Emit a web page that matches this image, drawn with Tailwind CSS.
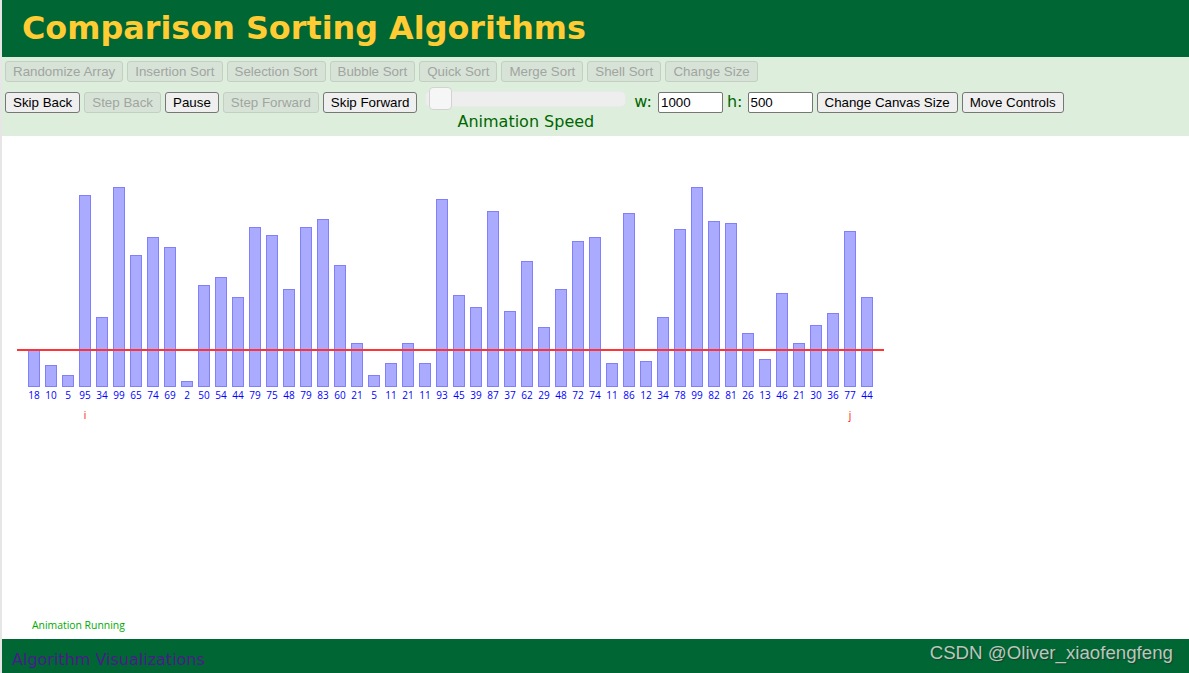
<!DOCTYPE html>
<html lang="en">
<head>
    <meta charset="UTF-8">
    <meta name="viewport" content="width=device-width, initial-scale=1.0">
    <title>Comparison Sorting Algorithms</title>
    <script src="https://cdn.jsdelivr.net/npm/@tailwindcss/browser@4"></script>
</head>
<body class="bg-white h-[673px] overflow-hidden font-['Liberation_Sans',sans-serif]">
    <div class="h-full flex flex-col border-l-2 border-[#e6e6e6]">
        <header class="h-[57px] shrink-0 bg-[#006633] flex items-center pl-[20px]">
            <h1 class="font-['DejaVu_Sans',sans-serif] font-bold text-[31.85px] text-[#ffcc33]">Comparison Sorting Algorithms</h1>
        </header>

        <section class="h-[79px] shrink-0 bg-[#ddeedd] pt-[4px] pl-[3px] text-[13.33px] leading-[15px]">
            <div class="flex gap-[4px] h-[21px]">
                <button disabled class="px-[7px] border border-[#c4cfc4] rounded-[3px] bg-[#d8e3d8] text-[#a0a5a0]">Randomize Array</button>
                <button disabled class="px-[7px] border border-[#c4cfc4] rounded-[3px] bg-[#d8e3d8] text-[#a0a5a0]">Insertion Sort</button>
                <button disabled class="px-[7px] border border-[#c4cfc4] rounded-[3px] bg-[#d8e3d8] text-[#a0a5a0]">Selection Sort</button>
                <button disabled class="px-[7px] border border-[#c4cfc4] rounded-[3px] bg-[#d8e3d8] text-[#a0a5a0]">Bubble Sort</button>
                <button disabled class="px-[7px] border border-[#c4cfc4] rounded-[3px] bg-[#d8e3d8] text-[#a0a5a0]">Quick Sort</button>
                <button disabled class="px-[7px] border border-[#c4cfc4] rounded-[3px] bg-[#d8e3d8] text-[#a0a5a0]">Merge Sort</button>
                <button disabled class="px-[7px] border border-[#c4cfc4] rounded-[3px] bg-[#d8e3d8] text-[#a0a5a0]">Shell Sort</button>
                <button disabled class="w-[93px] border border-[#c4cfc4] rounded-[3px] bg-[#d8e3d8] text-[#a0a5a0]">Change Size</button>
            </div>
            <div class="flex gap-[4px] mt-[10px]">
                <button class="h-[21px] px-[7px] border border-[#767676] rounded-[3px] bg-[#efefef] text-black">Skip Back</button>
                <button disabled class="h-[21px] px-[7px] border border-[#c4cfc4] rounded-[3px] bg-[#d8e3d8] text-[#a0a5a0]">Step Back</button>
                <button class="h-[21px] px-[7px] border border-[#767676] rounded-[3px] bg-[#efefef] text-black">Pause</button>
                <button disabled class="h-[21px] px-[7px] border border-[#c4cfc4] rounded-[3px] bg-[#d8e3d8] text-[#a0a5a0]">Step Forward</button>
                <button class="h-[21px] px-[7px] border border-[#767676] rounded-[3px] bg-[#efefef] text-black">Skip Forward</button>

                <div class="w-[201px] ml-[4px] -mt-[1px] flex flex-col items-center">
                    <div class="relative w-full h-[16px] rounded-[5px] bg-[#eeeeee] border border-[#e6ebe6]">
                        <div class="absolute left-[3px] top-[-5px] w-[23px] h-[23px] rounded-[4px] bg-[#f6f6f6] border border-[#d3d3d3]"></div>
                    </div>
                    <div class="mt-[5px] font-['DejaVu_Sans',sans-serif] text-[16px] leading-[19px] text-[#006600]">Animation Speed</div>
                </div>

                <label class="ml-[4px] font-['DejaVu_Sans',sans-serif] text-[16px] leading-[19px] text-[#006600]">w:</label>
                <input value="1000" class="ml-[2px] w-[65px] h-[21px] px-[2px] border border-[#767676] rounded-[2px] bg-white text-black">
                <label class="font-['DejaVu_Sans',sans-serif] text-[16px] leading-[19px] text-[#006600]">h:</label>
                <input value="500" class="ml-[1px] w-[65px] h-[21px] px-[2px] border border-[#767676] rounded-[2px] bg-white text-black">
                <button class="h-[21px] px-[7px] border border-[#767676] rounded-[3px] bg-[#efefef] text-black">Change Canvas Size</button>
                <button class="h-[21px] px-[7px] border border-[#767676] rounded-[3px] bg-[#efefef] text-black">Move Controls</button>
            </div>
        </section>

        <main class="relative flex-1 bg-white flex flex-col">
            <div class="relative w-[867px] ml-[15px] mt-[51px]">
                <div id="chart" class="flex gap-[5px] pl-[11px]"></div>
                <!-- pivot line sits on top of the bars -->
                <div class="absolute left-0 right-0 top-[162px] h-[2px] bg-[#ff3333]"></div>
            </div>
            <div class="mt-auto mb-[7px] ml-[30px] font-['Open_Sans',sans-serif] text-[10.4px] leading-[14px] text-[#00aa00]">Animation Running</div>
        </main>

        <footer class="relative h-[34px] shrink-0 bg-[#006633] pl-[10px] pt-[9px]">
            <a class="font-['DejaVu_Sans',sans-serif] text-[16px] leading-[20px] text-[#4b1a8b]">Algorithm Visualizations</a>
            <div class="absolute right-[16px] top-[2px] text-[18.7px] leading-[24px] text-[#b5c9bd] font-['Liberation_Sans',sans-serif] [text-shadow:1px_1px_1px_#1f3d2b]">CSDN @Oliver_xiaofengfeng</div>
        </footer>
    </div>

    <script>
        const values = [18, 10, 5, 95, 34, 99, 65, 74, 69, 2, 50, 54, 44, 79, 75, 48, 79, 83, 60, 21, 5, 11, 21, 11, 93,
            45, 39, 87, 37, 62, 29, 48, 72, 74, 11, 86, 12, 34, 78, 99, 82, 81, 26, 13, 46, 21, 30, 36, 77, 44];
        const pointers = { 3: 'i', 48: 'j' };
        const chart = document.getElementById('chart');

        values.forEach((value, index) => {
            const col = document.createElement('div');
            col.className = 'w-[12px] flex flex-col items-center';
            col.innerHTML = `
                <div class="h-[200px] w-full flex items-end">
                    <div class="w-full bg-[#aaaaff] border border-[#8080ff]" style="height: ${value * 2 + 2}px"></div>
                </div>
                <div class="mt-[1px] h-[14px] font-['Open_Sans',sans-serif] text-[10px] leading-[14px] text-[#0000ff]">${value}</div>
                <div class="mt-[6px] h-[14px] font-['Open_Sans',sans-serif] text-[10px] leading-[14px] text-[#ff0000]">${pointers[index] || ''}</div>
            `;
            chart.appendChild(col);
        });
    </script>
</body>
</html>
